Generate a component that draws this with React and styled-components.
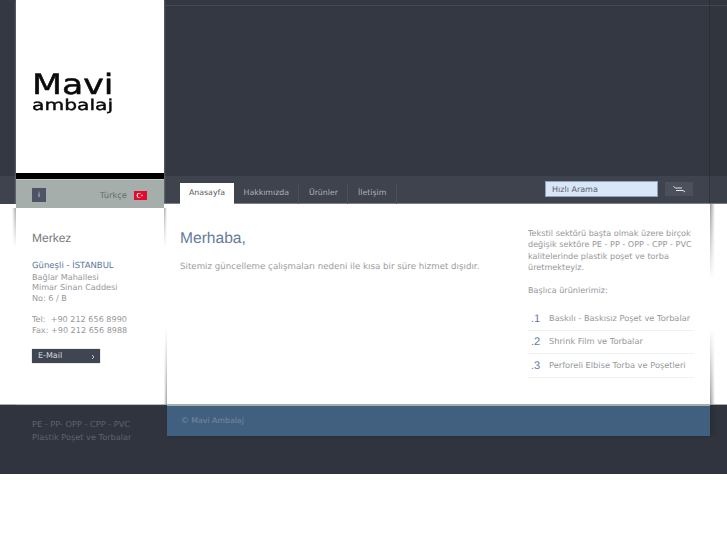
import React from "react";
import styled, { createGlobalStyle } from "styled-components";

const GlobalStyle = createGlobalStyle`
  html, body {
    margin: 0;
    padding: 0;
    background: #fff;
  }
  body {
    font-family: "DejaVu Sans", sans-serif;
    font-size: 8.1px;
    color: #96989b;
    text-rendering: geometricPrecision;
  }
  * {
    box-sizing: border-box;
  }
`;

const Top = styled.div`
  display: flex;
  height: 405px;
  background: linear-gradient(to bottom, #343842 0, #343842 176px, #3e434d 176px, #3e434d 204px, #fff 204px);
  border-bottom: 1px solid #a9aeab;
`;

const Sidebar = styled.aside`
  position: relative;
  width: 148px;
  margin-left: 16px;
  background: #fff;
  box-shadow: 0 0 2px rgba(255, 255, 255, 0.5);
  flex-shrink: 0;

  &::before,
  &::after {
    content: "";
    position: absolute;
    top: 208px;
    height: 40px;
    width: 4px;
    -webkit-mask-image: linear-gradient(to bottom, #000, transparent);
    mask-image: linear-gradient(to bottom, #000, transparent);
  }
  &::before {
    left: -4px;
    background: linear-gradient(to left, #a8a8a8, #fff);
  }
  &::after {
    right: -3px;
    width: 3px;
    background: linear-gradient(to right, #a8a8a8, #fff);
  }
`;

const LogoPanel = styled.div`
  height: 173px;
  display: flex;
  flex-direction: column;
  padding: 72px 0 0 16px;
  color: #0b0b0b;
  font-family: "DejaVu Sans", sans-serif;
`;

const LogoTop = styled.div`
  font-size: 28px;
  line-height: 26px;
  height: 26px;
  transform: scaleX(1.24);
  transform-origin: left center;
  -webkit-text-stroke: 0.5px #0b0b0b;
`;

const LogoBottom = styled.div`
  font-size: 15px;
  line-height: 15px;
  height: 15px;
  transform: scaleX(1.35);
  transform-origin: left center;
  -webkit-text-stroke: 0.4px #0b0b0b;
`;

const BlackBar = styled.div`
  height: 6px;
  background: #000;
`;

const LangBar = styled.div`
  height: 29px;
  display: flex;
  align-items: center;
  justify-content: space-between;
  padding: 2px 17px 0 16px;
  background: #a5aeaa;
  border-top: 1px solid #c3cac6;
`;

const InfoBox = styled.div`
  width: 14px;
  height: 14px;
  background: #4e5465;
  color: #e6e6e6;
  font-size: 7px;
  display: flex;
  align-items: center;
  justify-content: center;
`;

const Lang = styled.div`
  display: flex;
  align-items: center;
  gap: 7px;
  color: #666c73;
  font-size: 8.4px;
`;

const Address = styled.div`
  padding: 23px 0 0 16px;
  line-height: 10.6px;
`;

const Heading = styled.h3`
  margin: 0 0 16px;
  font-family: "Liberation Sans", sans-serif;
  font-size: 12px;
  line-height: 15px;
  font-weight: 400;
  color: #77797c;
`;

const City = styled.div`
  color: #5d7898;
  font-size: 8.5px;
  line-height: 9.6px;
`;

const Gap = styled.div`
  height: 10.6px;
`;

const MailButton = styled.a`
  display: flex;
  align-items: center;
  justify-content: space-between;
  width: 68px;
  height: 14px;
  margin-top: 14px;
  padding: 1px 5px 0 6px;
  background: #3f4551;
  color: #d5d8dc;
  font-size: 8px;
  box-shadow: 0 0 1px #888;
`;

const Main = styled.main`
  position: relative;
  flex: 1;
  display: flex;
  flex-direction: column;
  min-width: 0;

  /* darker strip past the content edge */
  &::after {
    content: "";
    position: absolute;
    top: 0;
    right: 0;
    width: 17px;
    height: 204px;
    background: rgba(0, 0, 0, 0.05);
    border-left: 1px solid rgba(0, 0, 0, 0.15);
  }
`;

const Hero = styled.div`
  height: 171px;
  margin-top: 5px;
  border-top: 1px solid #454a53;
  flex: none;
`;

const NavBar = styled.nav`
  height: 28px;
  display: flex;
  align-items: flex-end;
  padding-left: 16px;
  flex: none;
  border-bottom: 1px solid #7c818a;
`;

const Tab = styled.a`
  height: 21px;
  margin-bottom: -1px;
  display: flex;
  align-items: center;
  padding: 0 ${(p) => (p.$active ? 9 : 9.5)}px 2px;
  font-size: 7.8px;
  color: ${(p) => (p.$active ? "#555a60" : "#aeb2b8")};
  background: ${(p) => (p.$active ? "#fff" : "transparent")};
  border-right: ${(p) => (p.$active ? "none" : "1px solid #4a4f59")};
`;

const SearchBox = styled.div`
  margin-left: auto;
  display: flex;
  align-self: center;
  gap: 7px;
  margin-right: 34px;
  margin-top: -1px;
`;

const SearchInput = styled.div`
  width: 113px;
  height: 16px;
  padding: 1px 0 0 6px;
  line-height: 14px;
  background: #d9e6f7;
  border: 1px solid #8ea3ba;
  color: #55606c;
  font-size: 8px;
`;

const SearchButton = styled.div`
  width: 28px;
  height: 14px;
  margin-top: 1px;
  background: #4b505c;
  display: flex;
  align-items: center;
  justify-content: center;
`;

const Body = styled.div`
  position: relative;
  flex: 1;
  margin: 0 17px 0 3px;
  padding: 26px 16px 0 13px;
  display: flex;
  background: #fff;

  &::before,
  &::after {
    content: "";
    position: absolute;
  }
  /* right edge shadow, fades out in the middle */
  &::before {
    top: 0;
    bottom: 0;
    right: -5px;
    width: 5px;
    background: linear-gradient(to right, #999, #fff);
    -webkit-mask-image: linear-gradient(to bottom, #000, transparent 38%, transparent 62%, #000);
    mask-image: linear-gradient(to bottom, #000, transparent 38%, transparent 62%, #000);
  }
  &::after {
    bottom: 0;
    left: -3px;
    width: 3px;
    height: 76px;
    background: linear-gradient(to right, #fff, #999);
    -webkit-mask-image: linear-gradient(to top, #000, transparent);
    mask-image: linear-gradient(to top, #000, transparent);
  }
`;

const Intro = styled.div`
  flex: 1;
`;

const Title = styled.h1`
  margin: 0 0 14px;
  font-family: "Liberation Sans", sans-serif;
  font-size: 15.6px;
  line-height: 18px;
  font-weight: 400;
  color: #637d9c;
`;

const Lead = styled.p`
  margin: 0;
  font-size: 8.68px;
  line-height: 11px;
  color: #9b9da0;
`;

const Aside = styled.div`
  width: 166px;
  margin-top: -2px;
  line-height: 11.4px;
  font-size: 8.1px;
  color: #95989b;
`;

const ProductList = styled.ul`
  list-style: none;
  margin: 11px 0 0;
  padding: 0;
  font-size: 8.25px;
`;

const Product = styled.li`
  display: flex;
  align-items: center;
  height: 23.5px;
  padding: 0 0 0 3px;
  border-bottom: 1px solid #eef1f1;
`;

const ProductNo = styled.span`
  width: 18px;
  flex: none;
  padding-top: 2px;
  font-family: "Liberation Sans", sans-serif;
  font-size: 11px;
  color: #5d7ca2;
`;

const Footer = styled.footer`
  display: flex;
  height: 69px;
  background: #30343e;
`;

const FooterNote = styled.div`
  width: 167px;
  flex: none;
  padding: 13px 0 0 32px;
  color: #5e636f;
  line-height: 13px;
  white-space: nowrap;
  font-size: 8.2px;
`;

const Copyright = styled.div`
  width: 543px;
  height: 33px;
  margin-top: -2px;
  padding: 10px 0 0 14px;
  background: #41607f;
  border-top: 3px solid #a5aeaa;
  color: #76899f;
  font-size: 7.8px;
  box-shadow: 3px 0 4px rgba(0, 0, 0, 0.15);
`;

const Flag = () => (
  <svg width="13" height="9" viewBox="0 0 13 9">
    <rect width="13" height="9" fill="#e30a2c" />
    <circle cx="5" cy="4.5" r="2.4" fill="#fff" />
    <circle cx="5.6" cy="4.5" r="1.9" fill="#e30a2c" />
    <circle cx="8" cy="4.5" r="0.8" fill="#fff" />
  </svg>
);

const SwapIcon = () => (
  <svg width="13" height="7" viewBox="0 0 13 7" fill="none" stroke="#e4e6e8" strokeWidth="1">
    <path d="M0.5 0.5L2.5 2H9" />
    <path d="M3 4.5h7L12 6" />
  </svg>
);

const Chevron = () => (
  <svg width="4" height="6" viewBox="0 0 4 6" fill="none" stroke="#c8ccd0" strokeWidth="1">
    <path d="M1 1l2 2-2 2" />
  </svg>
);

export default function App() {
  return (
    <>
      <GlobalStyle />
      <Top>
        <Sidebar>
          <LogoPanel>
            <LogoTop>Mavi</LogoTop>
            <LogoBottom>ambalaj</LogoBottom>
          </LogoPanel>
          <BlackBar />
          <LangBar>
            <InfoBox>i</InfoBox>
            <Lang>
              Türkçe <Flag />
            </Lang>
          </LangBar>
          <Address>
            <Heading>Merkez</Heading>
            <City>Güneşli - İSTANBUL</City>
            <div>Bağlar Mahallesi</div>
            <div>Mimar Sinan Caddesi</div>
            <div>No: 6 / B</div>
            <Gap />
            <div>Tel:&nbsp;&nbsp;+90 212 656 8990</div>
            <div>Fax: +90 212 656 8988</div>
            <MailButton>
              E-Mail <Chevron />
            </MailButton>
          </Address>
        </Sidebar>
        <Main>
          <Hero />
          <NavBar>
            <Tab $active>Anasayfa</Tab>
            <Tab>Hakkımızda</Tab>
            <Tab>Ürünler</Tab>
            <Tab>İletişim</Tab>
            <SearchBox>
              <SearchInput>Hızlı Arama</SearchInput>
              <SearchButton>
                <SwapIcon />
              </SearchButton>
            </SearchBox>
          </NavBar>
          <Body>
            <Intro>
              <Title>Merhaba,</Title>
              <Lead>Sitemiz güncelleme çalışmaları nedeni ile kısa bir süre hizmet dışıdır.</Lead>
            </Intro>
            <Aside>
              Tekstil sektörü başta olmak üzere birçok değişik sektöre PE - PP - OPP - CPP - PVC kalitelerinde
              plastik poşet ve torba üretmekteyiz.
              <br />
              <br />
              Başlıca ürünlerimiz:
              <ProductList>
                <Product>
                  <ProductNo>.1</ProductNo>Baskılı - Baskısız Poşet ve Torbalar
                </Product>
                <Product>
                  <ProductNo>.2</ProductNo>Shrink Film ve Torbalar
                </Product>
                <Product>
                  <ProductNo>.3</ProductNo>Perforeli Elbise Torba ve Poşetleri
                </Product>
              </ProductList>
            </Aside>
          </Body>
        </Main>
      </Top>
      <Footer>
        <FooterNote>
          PE - PP- OPP - CPP - PVC
          <br />
          Plastik Poşet ve Torbalar
        </FooterNote>
        <Copyright>© Mavi Ambalaj</Copyright>
      </Footer>
    </>
  );
}
